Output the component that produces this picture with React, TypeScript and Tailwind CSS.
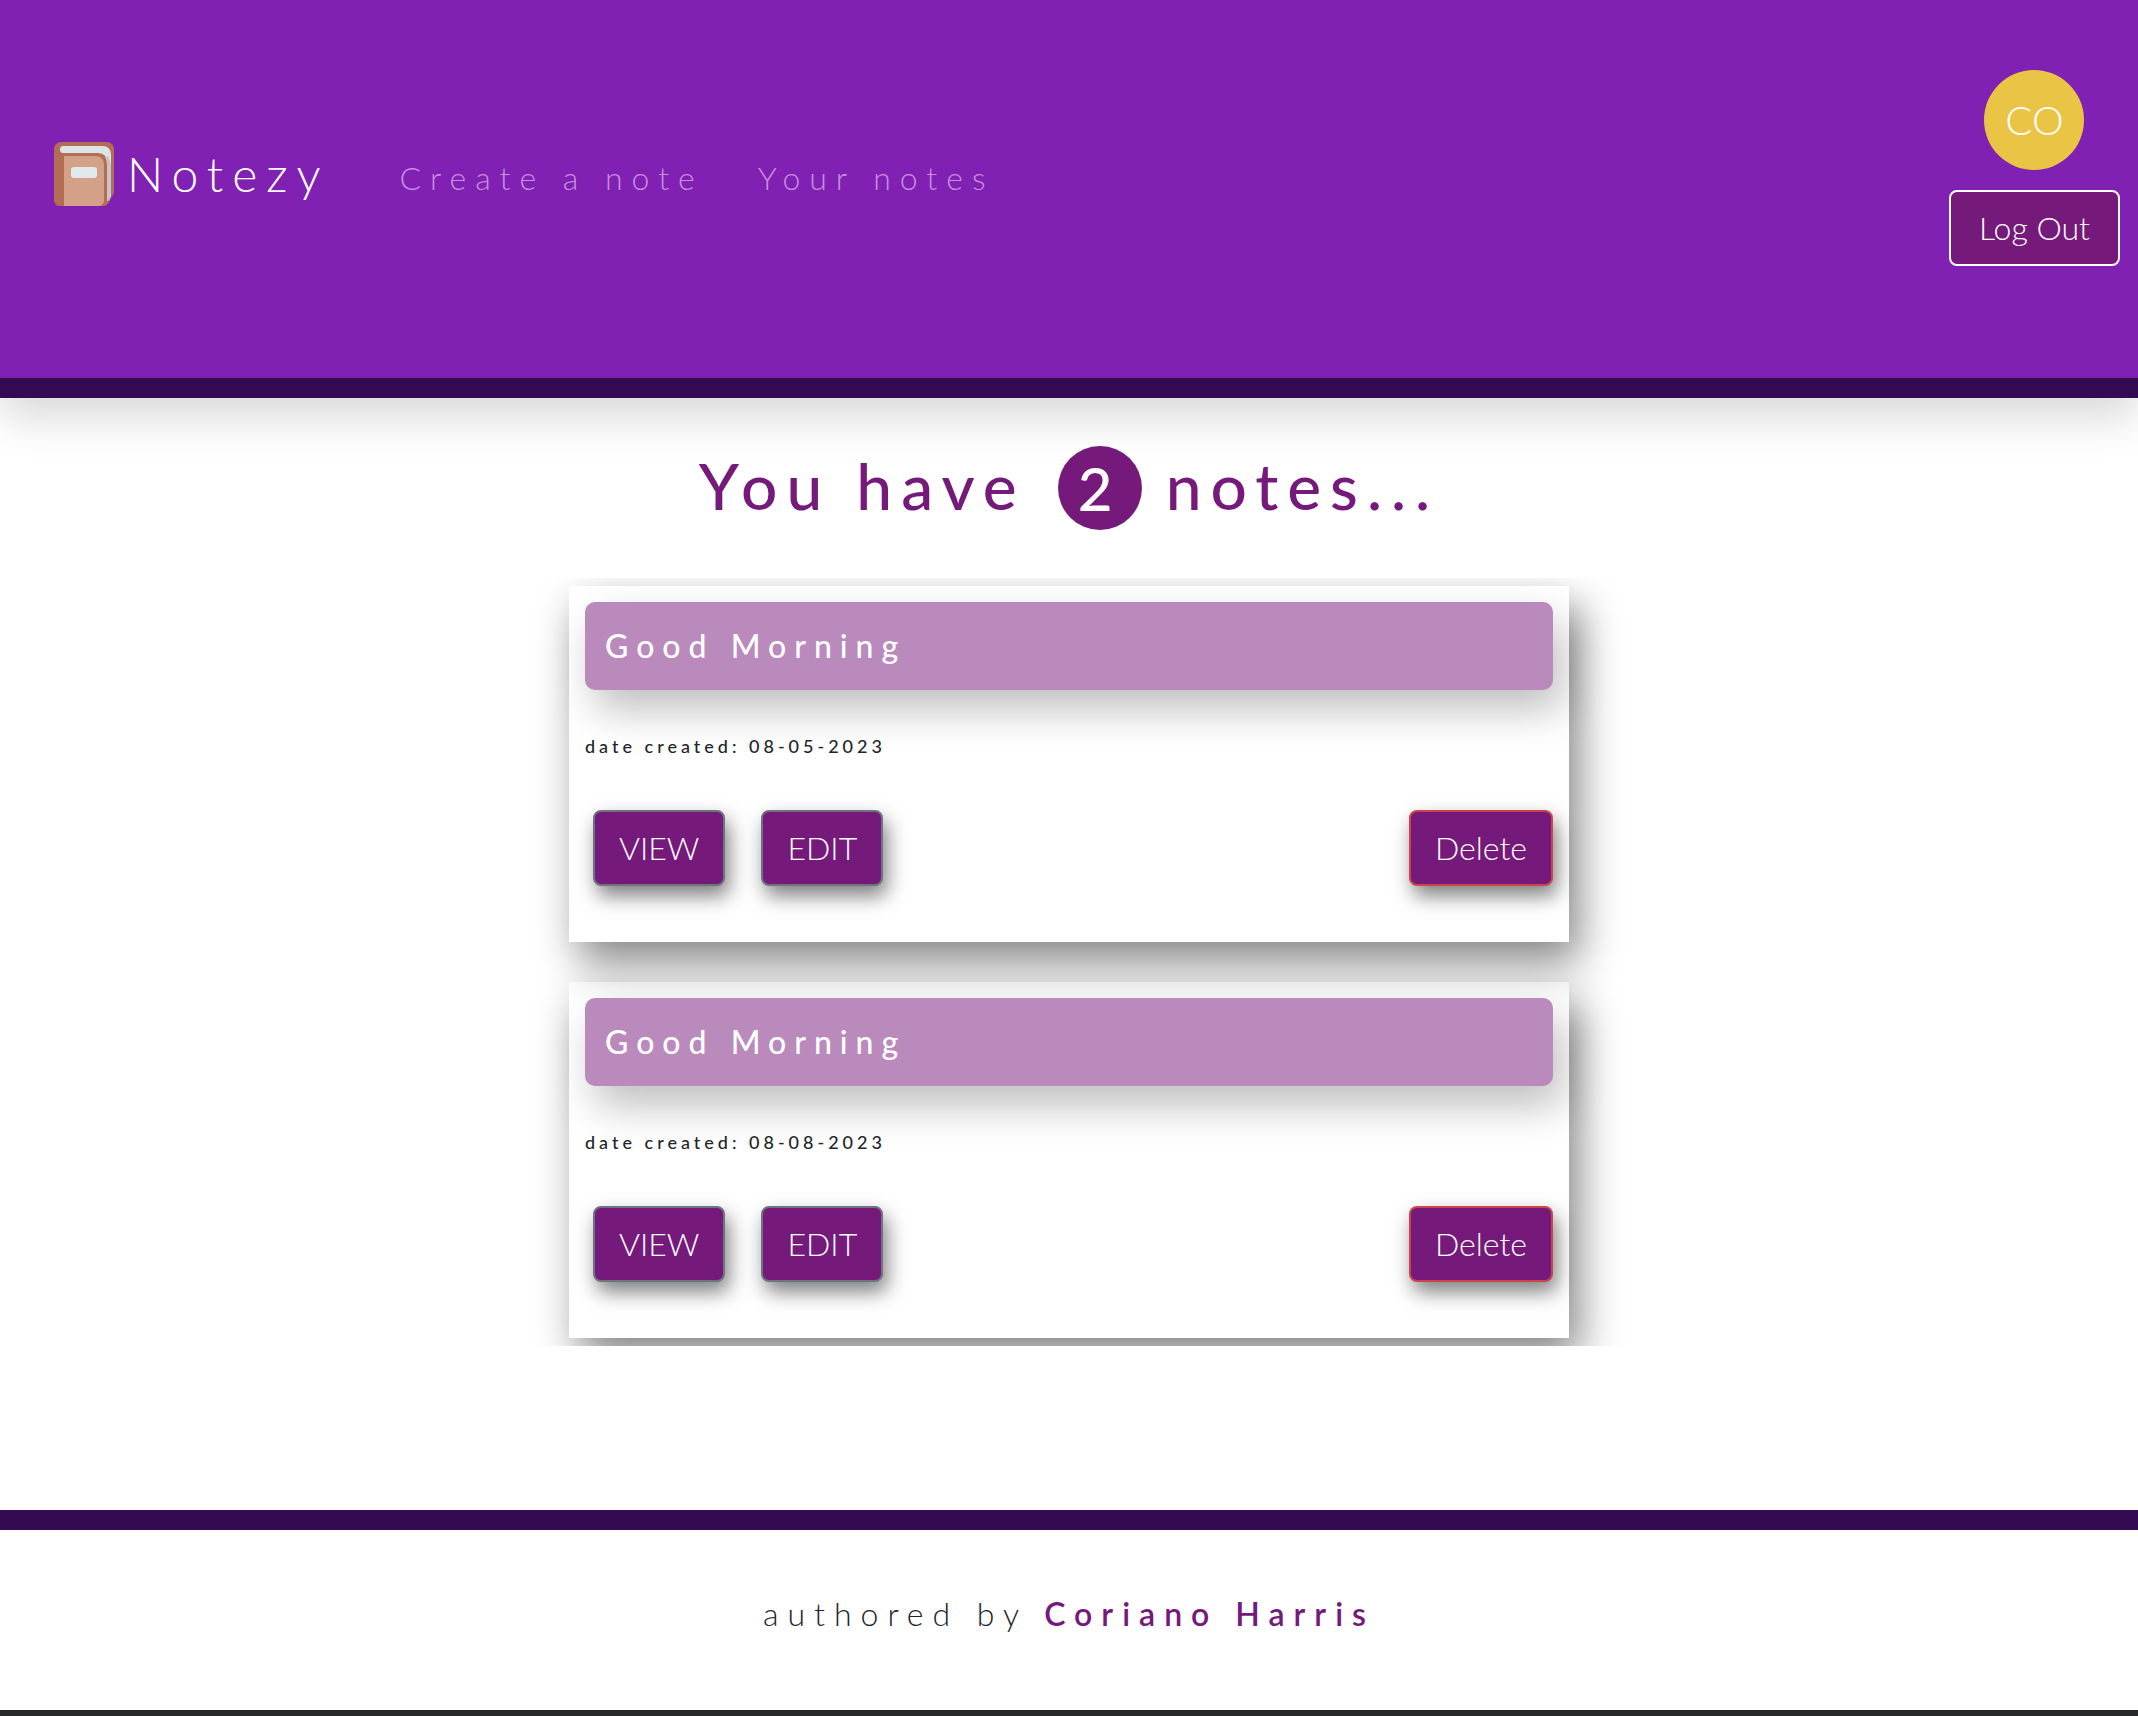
const notes = [
  { title: "Good Morning", date: "08-05-2023" },
  { title: "Good Morning", date: "08-08-2023" },
];

function BookLogo() {
  return (
    <svg viewBox="0 0 62 64" className="h-16 w-[62px]" aria-hidden="true">
      <path d="M9 0h44q8 0 8 8v42q0 3-3 5-1 6-6 9H5q-4-2-4-6V8q0-8 8-8z" fill="#b46d55" />
      <path d="M10 4h39q9 0 9 9v41q-1 4-4 5V21q0-10-9-10H10q-3 0-3-3.500t3-3.500z" fill="#dde4e8" />
      <path d="M55 14q3 5 3 12v28q-1 4-4 5V22q0-4-2-7z" fill="#c3c7cb" />
      <path d="M11 14h31q9 0 9 9v35q0 4-4 6H11z" fill="#d2a187" />
      <rect x="18" y="25" width="26" height="11" rx="3" fill="#e1e8ec" />
    </svg>
  );
}

const actionButton =
  "h-[76px] rounded-lg border-2 bg-[#75197b] px-6 text-[32px] leading-[48px] font-light text-white shadow-[4px_10px_20px_rgba(0,0,0,0.5)]";

function NoteCard({ title, date }: { title: string; date: string }) {
  return (
    <article className="flex h-[356px] flex-col p-4 shadow-[10px_20px_40px_rgba(0,0,0,0.48)]">
      <h2 className="rounded-[10px] bg-[#ba8abc] px-5 py-5 text-[32px] leading-[48px] font-medium tracking-[8px] text-white shadow-[10px_20px_40px_rgba(0,0,0,0.25)]">
        {title}
      </h2>
      <p className="mt-10 text-[18px] leading-8 font-medium tracking-[4px] text-[#212529]">
        date created: {date}
      </p>
      <div className="mt-12 flex pl-2">
        <button className={`${actionButton} border-[#6c757d]`}>VIEW</button>
        <button className={`${actionButton} ml-9 border-[#6c757d]`}>EDIT</button>
        <button className={`${actionButton} ml-auto border-[#cb444a]`}>Delete</button>
      </div>
    </article>
  );
}

export default function App() {
  return (
    <div className="flex min-h-screen flex-col bg-white font-[Lato,sans-serif] text-[#212529]">
      <header className="flex h-[398px] items-start border-b-20 border-[#340b52] bg-[#8021b3] shadow-[0_20px_40px_rgba(0,0,0,0.15)]">
        <a href="#" className="mt-[142px] ml-[53px] flex items-center text-white">
          <BookLogo />
          <span className="ml-3 text-[48px] leading-[64px] font-light tracking-[9px]">Notezy</span>
        </a>
        <nav className="mt-[154px] ml-[70px] flex gap-[54px] text-[32px] leading-[48px] font-light tracking-[9px] text-[#c68fdf]">
          <a href="#create">Create a note</a>
          <a href="#notes">Your notes</a>
        </nav>
        <div className="mt-[70px] mr-[18px] ml-auto flex flex-col items-center gap-5">
          <div className="flex size-[100px] items-center justify-center rounded-full bg-[#eac445] text-[40px] font-light text-white">
            CO
          </div>
          <button className="h-[76px] rounded-lg border-2 border-white bg-[#75197b] px-7 text-[32px] leading-[48px] font-light text-white">
            Log Out
          </button>
        </div>
      </header>

      <main className="flex grow flex-col items-center">
        <h1 className="mt-12 flex items-center text-[64px] leading-[80px] font-medium tracking-[9px] text-[#75197b]">
          <span className="pb-1">You have</span>
          <span className="mr-6 ml-8 flex size-[84px] items-center justify-center rounded-full bg-[#75197b] text-[60px] text-white">
            2
          </span>
          <span className="pb-1">notes...</span>
        </h1>
        <section className="mt-12 flex w-full flex-col items-center overflow-hidden py-2">
          <div className="flex w-[1000px] max-w-full flex-col gap-10">
            {notes.map((note) => (
              <NoteCard key={note.date} title={note.title} date={note.date} />
            ))}
          </div>
        </section>
      </main>

      <footer className="border-t-20 border-[#340b52]">
        <p className="flex justify-center gap-4 pt-15 pb-18 text-[32px] leading-[48px] font-light tracking-[9px]">
          <span>authored by</span>
          <a href="#author" className="font-semibold text-[#75197b]">Coriano Harris</a>
        </p>
        <div className="h-[6px] bg-[#27292d]" />
      </footer>
    </div>
  );
}
